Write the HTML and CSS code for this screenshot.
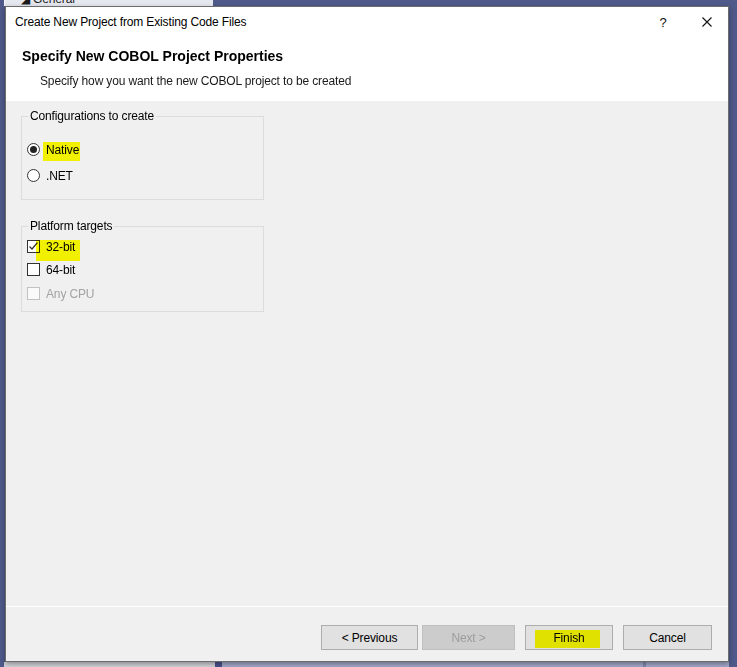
FILE: index.html
```html
<!DOCTYPE html>
<html>
<head>
<meta charset="utf-8">
<link rel="stylesheet" href="styles.css">
</head>
<body>
<div class="topstrip">
  <div class="tab"><span class="tab-label">&#9698; General</span></div>
</div>
<div class="mid">
  <div class="leftstrip"></div>
  <div class="dialog">
    <div class="header">
      <div class="titlebar">
        <span class="title">Create New Project from Existing Code Files</span>
        <span class="help">?</span>
        <span class="close">
          <svg width="10" height="10" viewBox="0 0 10 10"><path d="M0.5 0.5 L9.5 9.5 M9.5 0.5 L0.5 9.5" stroke="#111" stroke-width="1.1" fill="none"/></svg>
        </span>
      </div>
      <div class="heading">Specify New COBOL Project Properties</div>
      <div class="subtitle">Specify how you want the new COBOL project to be created</div>
    </div>
    <div class="content">
      <fieldset class="group">
        <legend>Configurations to create</legend>
        <div class="rows rows-radio">
          <div class="row"><span class="radio checked"><span class="dot"></span></span><span class="label hl hl-native">Native</span></div>
          <div class="row"><span class="radio"></span><span class="label">.NET</span></div>
        </div>
      </fieldset>
      <fieldset class="group group2">
        <legend>Platform targets</legend>
        <div class="rows rows-check">
          <div class="row"><span class="check"><svg width="11" height="11" viewBox="0 0 11 11"><path d="M1.5 5.5 L4 8 L9.5 1.5" stroke="#333" stroke-width="1.2" fill="none"/></svg></span><span class="label hl hl-32">32-bit</span></div>
          <div class="row"><span class="check"></span><span class="label">64-bit</span></div>
          <div class="row row-last"><span class="check disabled"></span><span class="label disabled-text">Any CPU</span></div>
        </div>
      </fieldset>
    </div>
    <div class="sep"></div>
    <div class="footer">
      <button class="btn btn-prev">&lt; Previous</button>
      <button class="btn btn-next" disabled>Next &gt;</button>
      <button class="btn btn-finish">Finish</button>
      <button class="btn btn-cancel">Cancel</button>
    </div>
  </div>
  <div class="rightstrip"></div>
</div>
<div class="bottomstrip">
  <div class="b-dark"></div>
  <div class="b-shadow"></div>
  <div class="b-dark2"></div>
  <div class="b-lav"></div>
  <div class="b-div"></div>
  <div class="b-lav2"></div>
</div>
</body>
</html>
```
FILE: styles.css
```css
html, body {
  margin: 0;
  padding: 0;
}
body {
  width: 737px;
  height: 667px;
  overflow: hidden;
  background: #4f5a8a;
  font-family: "Liberation Sans", Arial, sans-serif;
  font-size: 12px;
  letter-spacing: -0.14px;
  color: #000;
}

.topstrip {
  height: 6px;
  display: flex;
}
.tab {
  width: 208px;
  margin-left: 4px;
  background: #e6e8f0;
  border-left: 1px solid #f7f8fb;
  overflow: hidden;
}
.tab-label {
  display: block;
  margin-top: -8px;
  padding-left: 16px;
  line-height: 14px;
  color: #1b1b1b;
}

.mid {
  display: flex;
  height: 656px;
}
.leftstrip {
  width: 5px;
  flex: none;
}
.rightstrip {
  flex: 1;
}
.dialog {
  width: 722px;
  height: 654px;
  flex: none;
  border: 1px solid #6c6c6c;
  background: #f0f0f0;
  display: flex;
  flex-direction: column;
  box-shadow: 0 2px 5px rgba(0, 0, 0, 0.35);
  position: relative;
  z-index: 1;
}

.header {
  background: #fff;
  height: 94px;
  flex: none;
}
.titlebar {
  box-sizing: border-box;
  height: 28px;
  display: flex;
  align-items: center;
  padding: 2px 0 0 9px;
}
.title {
  flex: 1;
  color: #000;
}
.help {
  width: 44px;
  text-align: center;
  font-size: 13px;
  color: #111;
}
.close {
  width: 43px;
  display: flex;
  justify-content: center;
  align-items: center;
}
.close svg {
  display: block;
}
.heading {
  margin: 12px 0 0 16px;
  font-weight: bold;
  font-size: 14px;
  letter-spacing: 0;
  line-height: 18px;
}
.subtitle {
  margin: 8px 0 0 34px;
  line-height: 16px;
  color: #1a1a1a;
}

.content {
  flex: 1;
  padding-left: 15px;
}
.group {
  box-sizing: border-box;
  width: 243px;
  margin: 7px 0 0 0;
  padding: 0;
  border: 1px solid #dcdcdc;
}
.group2 {
  margin-top: 18px;
}
.group legend {
  margin-left: 6px;
  padding: 1px 2px 0;
  line-height: 15px;
  font-size: 12px;
}
.rows {
  display: flex;
  flex-direction: column;
  padding-left: 5px;
}
.rows-radio {
  padding-top: 17px;
  padding-bottom: 16px;
  gap: 10px;
}
.rows-check {
  padding-top: 4px;
  padding-bottom: 10px;
  gap: 7px;
}
.row-last {
  margin-top: 1px;
}
.row {
  display: flex;
  align-items: center;
  height: 16px;
}
.label {
  box-sizing: border-box;
  height: 16px;
  margin-left: 6px;
  padding-top: 2px;
  line-height: 14px;
}
.disabled-text {
  color: #a3a3a3;
}

.radio {
  box-sizing: border-box;
  width: 13px;
  height: 13px;
  border: 1px solid #333;
  border-radius: 50%;
  background: #fff;
  display: flex;
  align-items: center;
  justify-content: center;
  flex: none;
}
.dot {
  width: 7px;
  height: 7px;
  border-radius: 50%;
  background: #222;
}
.check {
  box-sizing: border-box;
  width: 13px;
  height: 13px;
  border: 1px solid #333;
  background: #fff;
  flex: none;
  display: flex;
  align-items: center;
  justify-content: center;
}
.check svg {
  display: block;
}
.check.disabled {
  border-color: #c2c2c2;
  background: #fafafa;
}

.hl {
  position: relative;
}
.hl::before {
  content: "";
  position: absolute;
  background: #ffff00;
  mix-blend-mode: multiply;
}
.hl-native::before {
  left: -3px;
  right: -1px;
  top: 1px;
  bottom: -4px;
}
.hl-32::before {
  left: -10px;
  right: -5px;
  top: 2px;
  bottom: -7px;
}

.sep {
  height: 1px;
  background: #fff;
  flex: none;
}
.footer {
  height: 54px;
  flex: none;
  box-sizing: border-box;
  display: flex;
  justify-content: flex-end;
  align-items: flex-start;
  padding: 18px 16px 0 0;
}
.btn {
  box-sizing: border-box;
  height: 25px;
  border: 1px solid #adadad;
  background: #e1e1e1;
  font-family: "Liberation Sans", Arial, sans-serif;
  font-size: 12px;
  letter-spacing: -0.14px;
  color: #000;
  padding: 1px 0 0;
  margin: 0;
  position: relative;
}
.btn-prev {
  width: 97px;
}
.btn-next {
  width: 93px;
  margin-left: 4px;
  background: #cccccc;
  border-color: #bfbfbf;
  color: #9d9d9d;
}
.btn-finish {
  width: 88px;
  margin-left: 10px;
}
.btn-finish::before {
  content: "";
  position: absolute;
  left: 9px;
  right: 12px;
  top: 4px;
  bottom: 1px;
  background: #ffff00;
  mix-blend-mode: multiply;
}
.btn-cancel {
  width: 89px;
  margin-left: 10px;
}

.bottomstrip {
  height: 5px;
  display: flex;
}
.b-dark {
  width: 4px;
}
.b-shadow {
  width: 211px;
  background: #d2d3d8;
}
.b-dark2 {
  width: 7px;
  background: #47528a;
}
.b-lav {
  width: 421px;
  background: #a2a9c9;
}
.b-div {
  width: 3px;
  background: #7f88b0;
}
.b-lav2 {
  width: 83px;
  background: #a2a9c9;
}
```
